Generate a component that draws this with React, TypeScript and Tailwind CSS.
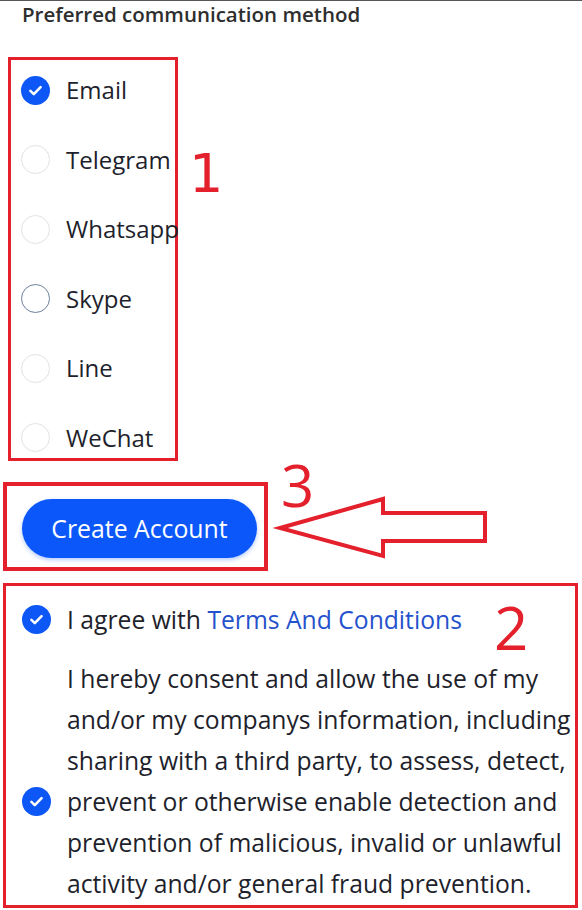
import React from 'react';

const options = [
  { label: 'Email', state: 'checked' },
  { label: 'Telegram', state: 'empty' },
  { label: 'Whatsapp', state: 'empty' },
  { label: 'Skype', state: 'focus' },
  { label: 'Line', state: 'empty' },
  { label: 'WeChat', state: 'empty' },
];

const CheckCircle = () => (
  <span className="flex h-[29px] w-[29px] shrink-0 items-center justify-center rounded-full bg-[#0c57f6]">
    <svg width="17" height="17" viewBox="0 0 16 16" fill="none">
      <path d="M3.2 8.4 6.4 11.4 12.8 4.8" stroke="white" strokeWidth="2.4" strokeLinecap="round" strokeLinejoin="round" />
    </svg>
  </span>
);

const Radio = ({ state }: { state: string }) => {
  if (state === 'checked') return <CheckCircle />;
  return (
    <span
      className={
        state === 'focus'
          ? 'h-[29px] w-[29px] shrink-0 rounded-full border border-[#6d7f9c]'
          : 'h-[29px] w-[29px] shrink-0 rounded-full border border-[#e2e2e6]'
      }
    />
  );
};

export default function App() {
  return (
    <div className="relative h-[910px] w-[582px] overflow-hidden border-t border-[#555] bg-white font-['Open_Sans',sans-serif] text-[#221f2c]">
      <h2 className="pl-[22px] pt-[2px] text-[20.5px] font-semibold leading-[22px] text-[#2e2e2e]">Preferred communication method</h2>

      {/* 1: communication options */}
      <div className="ml-[8px] mt-[32px] h-[404px] w-[170px] border-[3px] border-[#e3202b] pl-[10px] pt-[15px]">
        <div className="flex flex-col gap-[39.6px]">
          {options.map((o) => (
            <div key={o.label} className="flex h-[30px] items-center gap-[16px] whitespace-nowrap text-[24px]">
              <Radio state={o.state} />
              <span>{o.label}</span>
            </div>
          ))}
        </div>
      </div>

      {/* 3: create account */}
      <div className="ml-[3px] mt-[21px] h-[89px] w-[265px] border-4 border-[#e3202b] pl-[15px] pt-[13px]">
        <button className="h-[59px] w-[235px] rounded-full bg-[#0b57fa] text-[24.8px] text-white shadow-[0_2px_4px_rgba(11,87,250,0.3)]">
          Create Account
        </button>
      </div>

      {/* 2: agreements */}
      <div className="ml-[3px] mt-[12px] h-[325px] w-[575px] border-[3px] border-[#e3202b] pl-[16px] pt-[13px]">
        <div className="flex items-center gap-[16px] text-[24.7px] leading-[41px]">
          <CheckCircle />
          <span className="whitespace-nowrap">
            I agree with <span className="text-[#2552cc]">Terms And Conditions</span>
          </span>
        </div>
        <div className="mt-[18px] flex gap-[16px] text-[24.7px] leading-[41px]">
          <div className="mt-[129px] self-start">
            <CheckCircle />
          </div>
          <p className="whitespace-nowrap">
            I hereby consent and allow the use of my
            <br />
            and/or my companys information, including
            <br />
            sharing with a third party, to assess, detect,
            <br />
            prevent or otherwise enable detection and
            <br />
            prevention of malicious, invalid or unlawful
            <br />
            activity and/or general fraud prevention.
          </p>
        </div>
      </div>

      {/* annotation numbers and arrow */}
      <span className="absolute left-[189px] top-[146px] font-['DejaVu_Sans',sans-serif] text-[54px] leading-[54px] text-[#e3202b]">1</span>
      <span className="absolute left-[281px] top-[455px] font-['Open_Sans',sans-serif] text-[58px] leading-[58px] text-[#e3202b]">3</span>
      <span className="absolute left-[494px] top-[596px] font-['Open_Sans',sans-serif] text-[60px] leading-[60px] text-[#e3202b]">2</span>
      <svg className="absolute left-0 top-0" width="582" height="910" viewBox="0 0 582 910" fill="none">
        <polygon
          points="280,527 383,498 383,512 485,512 485,540 383,540 383,555"
          fill="white"
          stroke="#e3202b"
          strokeWidth="4"
          strokeLinejoin="miter"
        />
      </svg>
    </div>
  );
}
